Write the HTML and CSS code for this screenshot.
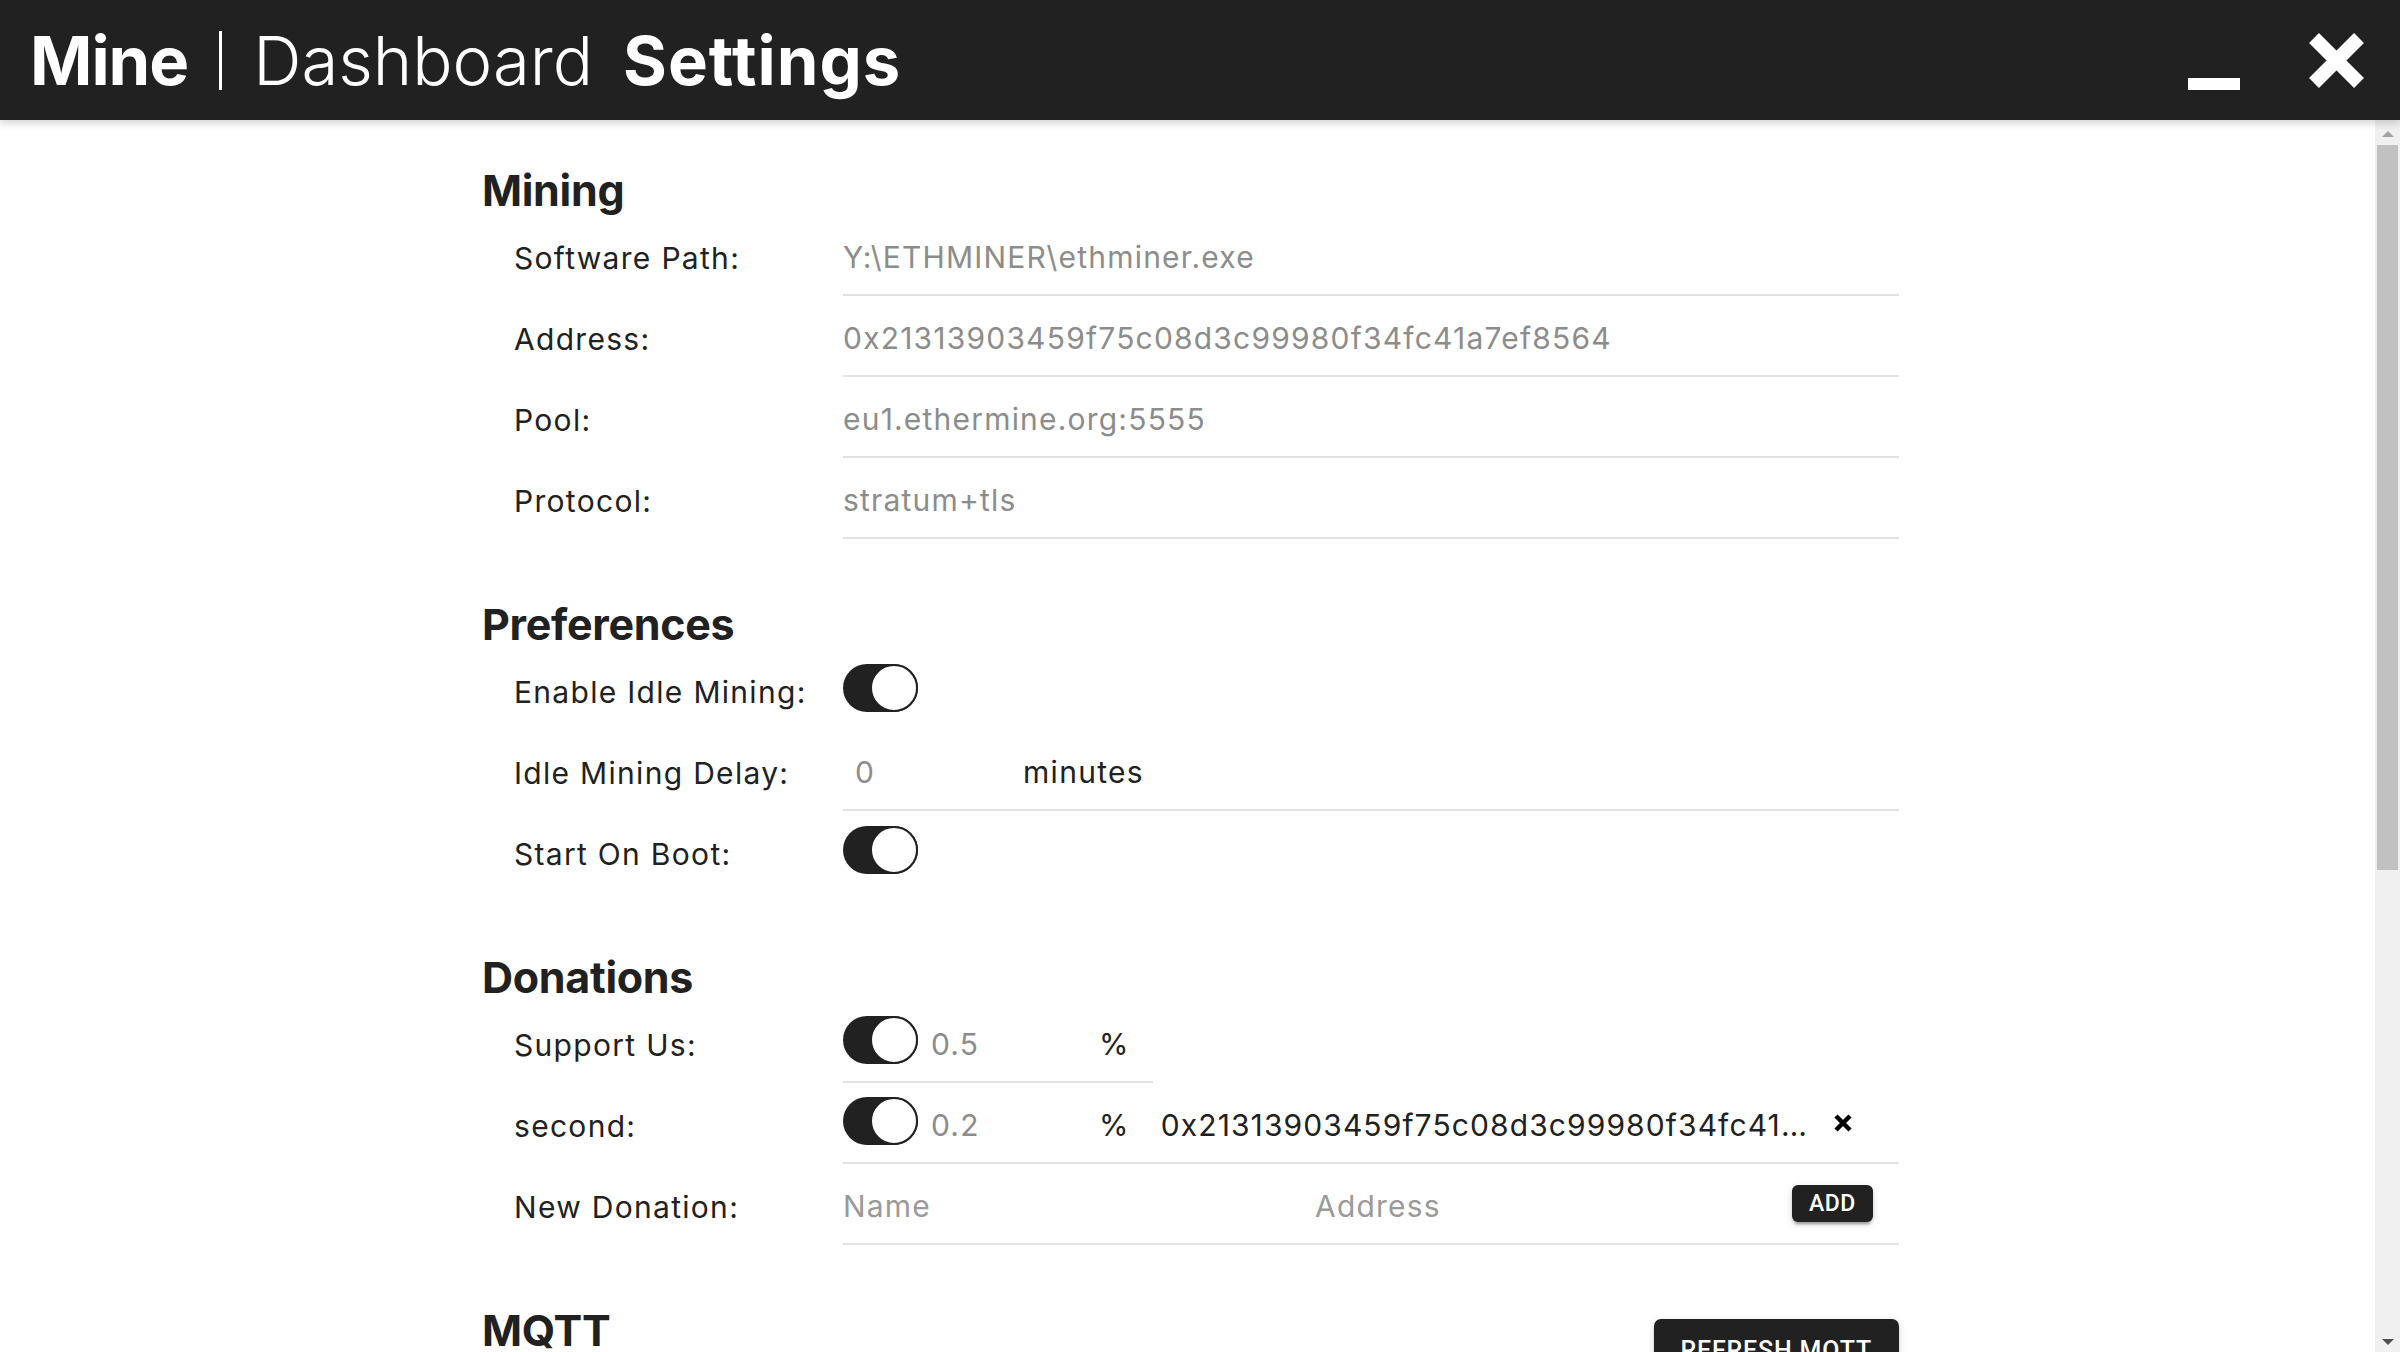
FILE: index.html
```html
<!DOCTYPE html>
<html lang="en">
<head>
<meta charset="utf-8">
<title>Mine Dashboard Settings</title>
<link rel="stylesheet" href="styles.css">
</head>
<body>
<header class="titlebar">
  <div class="brand">
    <span class="brand-mine">Mine</span>
    <span class="brand-sep"></span>
    <span class="brand-dash">Dashboard</span>
    <span class="brand-set">Settings</span>
  </div>
  <div class="win-ctrls">
    <button class="win-btn win-min" aria-label="Minimize"><span class="min-bar"></span></button>
    <button class="win-btn win-close" aria-label="Close">
      <svg viewBox="0 0 59 59" width="59" height="59"><path d="M7 7 L52 52 M52 7 L7 52" stroke="#fff" stroke-width="14" fill="none"/></svg>
    </button>
  </div>
</header>
<div class="body-wrap">
<main class="scroller">
  <div class="page">
    <section class="group">
      <h2 class="group-title">Mining</h2>
      <div class="row"><div class="label">Software Path:</div><div class="field line"><span class="val">Y:\ETHMINER\ethminer.exe</span></div></div>
      <div class="row"><div class="label">Address:</div><div class="field line"><span class="val">0x21313903459f75c08d3c99980f34fc41a7ef8564</span></div></div>
      <div class="row"><div class="label">Pool:</div><div class="field line"><span class="val">eu1.ethermine.org:5555</span></div></div>
      <div class="row"><div class="label">Protocol:</div><div class="field line"><span class="val">stratum+tls</span></div></div>
    </section>

    <section class="group">
      <h2 class="group-title">Preferences</h2>
      <div class="row"><div class="label">Enable Idle Mining:</div><div class="field"><span class="toggle on"><span class="knob"></span></span></div></div>
      <div class="row"><div class="label">Idle Mining Delay:</div><div class="field line"><span class="val num delay">0</span><span class="unit">minutes</span></div></div>
      <div class="row"><div class="label">Start On Boot:</div><div class="field"><span class="toggle on"><span class="knob"></span></span></div></div>
    </section>

    <section class="group">
      <h2 class="group-title">Donations</h2>
      <div class="row"><div class="label">Support Us:</div><div class="field"><div class="don-group line"><span class="toggle on"><span class="knob"></span></span><span class="val pct">0.5</span><span class="unit">%</span></div></div></div>
      <div class="row"><div class="label">second:</div><div class="field line"><span class="toggle on"><span class="knob"></span></span><span class="val pct">0.2</span><span class="unit">%</span><span class="don-addr">0x21313903459f75c08d3c99980f34fc41a7ef8564</span><button class="remove" aria-label="Remove"><svg viewBox="0 0 20 18" width="20" height="18"><path d="M3 2 L17 16 M17 2 L3 16" stroke="#000" stroke-width="4.5" fill="none"/></svg></button></div></div>
      <div class="row"><div class="label">New Donation:</div><div class="field line"><span class="val ph name-in">Name</span><span class="val ph addr-in">Address</span><button class="btn btn-small">ADD</button></div></div>
    </section>

    <section class="group">
      <div class="group-head"><h2 class="group-title">MQTT</h2><button class="btn btn-big">REFRESH MQTT</button></div>
      <div class="row"><div class="label">Enable MQTT:</div><div class="field"><span class="toggle on"><span class="knob"></span></span></div></div>
      <div class="row"><div class="label">Host:</div><div class="field line"><span class="val">mqtt.local</span></div></div>
      <div class="row"><div class="label">Port:</div><div class="field line"><span class="val">1883</span></div></div>
      <div class="row"><div class="label">Username:</div><div class="field line"><span class="val">miner</span></div></div>
      <div class="row"><div class="label">Password:</div><div class="field line"><span class="val">••••••••</span></div></div>
      <div class="row"><div class="label">Topic:</div><div class="field line"><span class="val">mine/dashboard</span></div></div>
    </section>
  </div>
</main>
<div class="vscroll" aria-hidden="true">
  <div class="sb-btn sb-up"><span class="tri-up"></span></div>
  <div class="sb-track"><div class="sb-thumb"></div></div>
  <div class="sb-btn sb-down"><span class="tri-down"></span></div>
</div>
</div>
</body>
</html>
```

FILE: styles.css
```css
html, body {
  margin: 0;
  padding: 0;
  height: 100%;
  overflow: hidden;
  background: #ffffff;
  font-family: "Inter", "Noto Sans", sans-serif;
  color: #212121;
}

/* ---------- title bar ---------- */
.titlebar {
  position: relative;
  z-index: 2;
  height: 120px;
  background: #212121;
  display: flex;
  align-items: center;
  justify-content: space-between;
  box-shadow: 0 3px 8px rgba(0, 0, 0, 0.18);
}
.brand {
  display: flex;
  align-items: center;
  padding-left: 30px;
  color: #ffffff;
  font-size: 67px;
}
.brand-mine { font-weight: 700; letter-spacing: -1px; }
.brand-sep {
  width: 3px;
  height: 59px;
  background: #ffffff;
  margin: 0 31px 0 31px;
}
.brand-dash { font-weight: 300; letter-spacing: 0; }
.brand-set { font-weight: 700; margin-left: 30px; letter-spacing: 1px; }

.win-ctrls {
  display: flex;
  align-items: center;
  padding-right: 34px;
  height: 100%;
}
.win-btn {
  background: none;
  border: 0;
  padding: 0;
  cursor: pointer;
}
.win-min {
  width: 52px;
  height: 59px;
  margin-right: 67px;
  display: flex;
  align-items: flex-end;
}
.min-bar {
  display: block;
  width: 52px;
  height: 12px;
  background: #ffffff;
}
.win-close { width: 59px; height: 59px; }
.win-close svg { display: block; }

/* ---------- body + scrollbar ---------- */
.body-wrap {
  display: flex;
  height: calc(100% - 120px);
}
.scroller {
  flex: 1;
  min-width: 0;
  overflow: hidden;
}
.vscroll {
  width: 25px;
  flex: none;
  background: #f0f0f0;
  display: flex;
  flex-direction: column;
}
.sb-btn {
  height: 25px;
  flex: none;
  display: flex;
  align-items: center;
  justify-content: center;
}
.tri-up {
  width: 0;
  height: 0;
  border-left: 6px solid transparent;
  border-right: 6px solid transparent;
  border-bottom: 6px solid #a3a3a3;
  margin-top: 2px;
}
.tri-down {
  width: 0;
  height: 0;
  border-left: 6px solid transparent;
  border-right: 6px solid transparent;
  border-top: 6px solid #505050;
  margin-top: 4px;
}
.sb-track {
  flex: 1;
  padding: 0 2px;
}
.sb-thumb {
  height: 725px;
  background: #c1c1c1;
}

.page {
  width: 1423px;
  margin: 0 auto;
  padding: 40px 0 0 6px;
  box-sizing: border-box;
}

/* ---------- groups ---------- */
.group { margin-bottom: 55px; }
.group-title {
  margin: 0;
  height: 52px;
  padding-top: 3px;
  line-height: 55px;
  font-size: 43px;
  font-weight: 700;
  letter-spacing: -0.3px;
  color: #212121;
}
.group-head {
  display: flex;
  justify-content: space-between;
  align-items: flex-start;
}

.row {
  display: grid;
  grid-template-columns: 329px 1fr;
  height: 81px;
  padding-left: 32px;
}
.label {
  display: flex;
  align-items: center;
  font-size: 30px;
  letter-spacing: 1.3px;
  color: #212121;
  padding-top: 4px;
  white-space: nowrap;
}
.field {
  display: flex;
  align-items: center;
  min-width: 0;
}
.line { border-bottom: 2px solid #e2e2e2; }

.val {
  font-size: 30px;
  letter-spacing: 1.2px;
  color: #8c8c8c;
  padding-top: 4px;
  white-space: nowrap;
}
.unit {
  font-size: 30px;
  letter-spacing: 1.3px;
  color: #212121;
  padding-top: 4px;
}
.delay { width: 168px; padding-left: 12px; }

/* toggle */
.toggle {
  position: relative;
  display: block;
  flex: none;
  width: 75px;
  height: 48px;
  border-radius: 24px;
  background: #212121;
  margin-bottom: 4px;
}
.toggle .knob {
  position: absolute;
  right: 0;
  top: 0;
  width: 44px;
  height: 44px;
  border: 2px solid #212121;
  border-radius: 50%;
  background: #ffffff;
}

/* donations */
.don-group {
  display: flex;
  align-items: center;
  height: 100%;
  width: 310px;
  box-sizing: border-box;
}
.pct { width: 168px; padding-left: 13px; }
.don-addr {
  width: 660px;
  margin-left: 31px;
  font-size: 30px;
  letter-spacing: 1.1px;
  color: #212121;
  white-space: nowrap;
  overflow: hidden;
  text-overflow: ellipsis;
  padding-top: 4px;
}
.remove {
  background: none;
  border: 0;
  padding: 0;
  margin-left: 12px;
  width: 20px;
  height: 18px;
  cursor: pointer;
}
.remove svg { display: block; }

.ph { color: #9a9a9a; }
.name-in { width: 472px; }
.addr-in { flex: 1; }

/* buttons */
.btn {
  font-family: "Roboto", "Liberation Sans", sans-serif;
  font-weight: 500;
  color: #ffffff;
  background: #212121;
  border: 0;
  text-transform: uppercase;
  cursor: pointer;
  box-shadow: 0 5px 2px -3px rgba(0,0,0,0.2), 0 3px 3px 0 rgba(0,0,0,0.14), 0 2px 8px 0 rgba(0,0,0,0.12);
}
.btn-small {
  height: 37px;
  padding: 0 17px;
  font-size: 23px;
  letter-spacing: 0.6px;
  border-radius: 6px;
  margin-right: 26px;
}
.btn-big {
  margin-top: 19px;
  height: 62px;
  padding: 0 27px;
  font-size: 25px;
  letter-spacing: 0.8px;
  border-radius: 7px;
}
```
